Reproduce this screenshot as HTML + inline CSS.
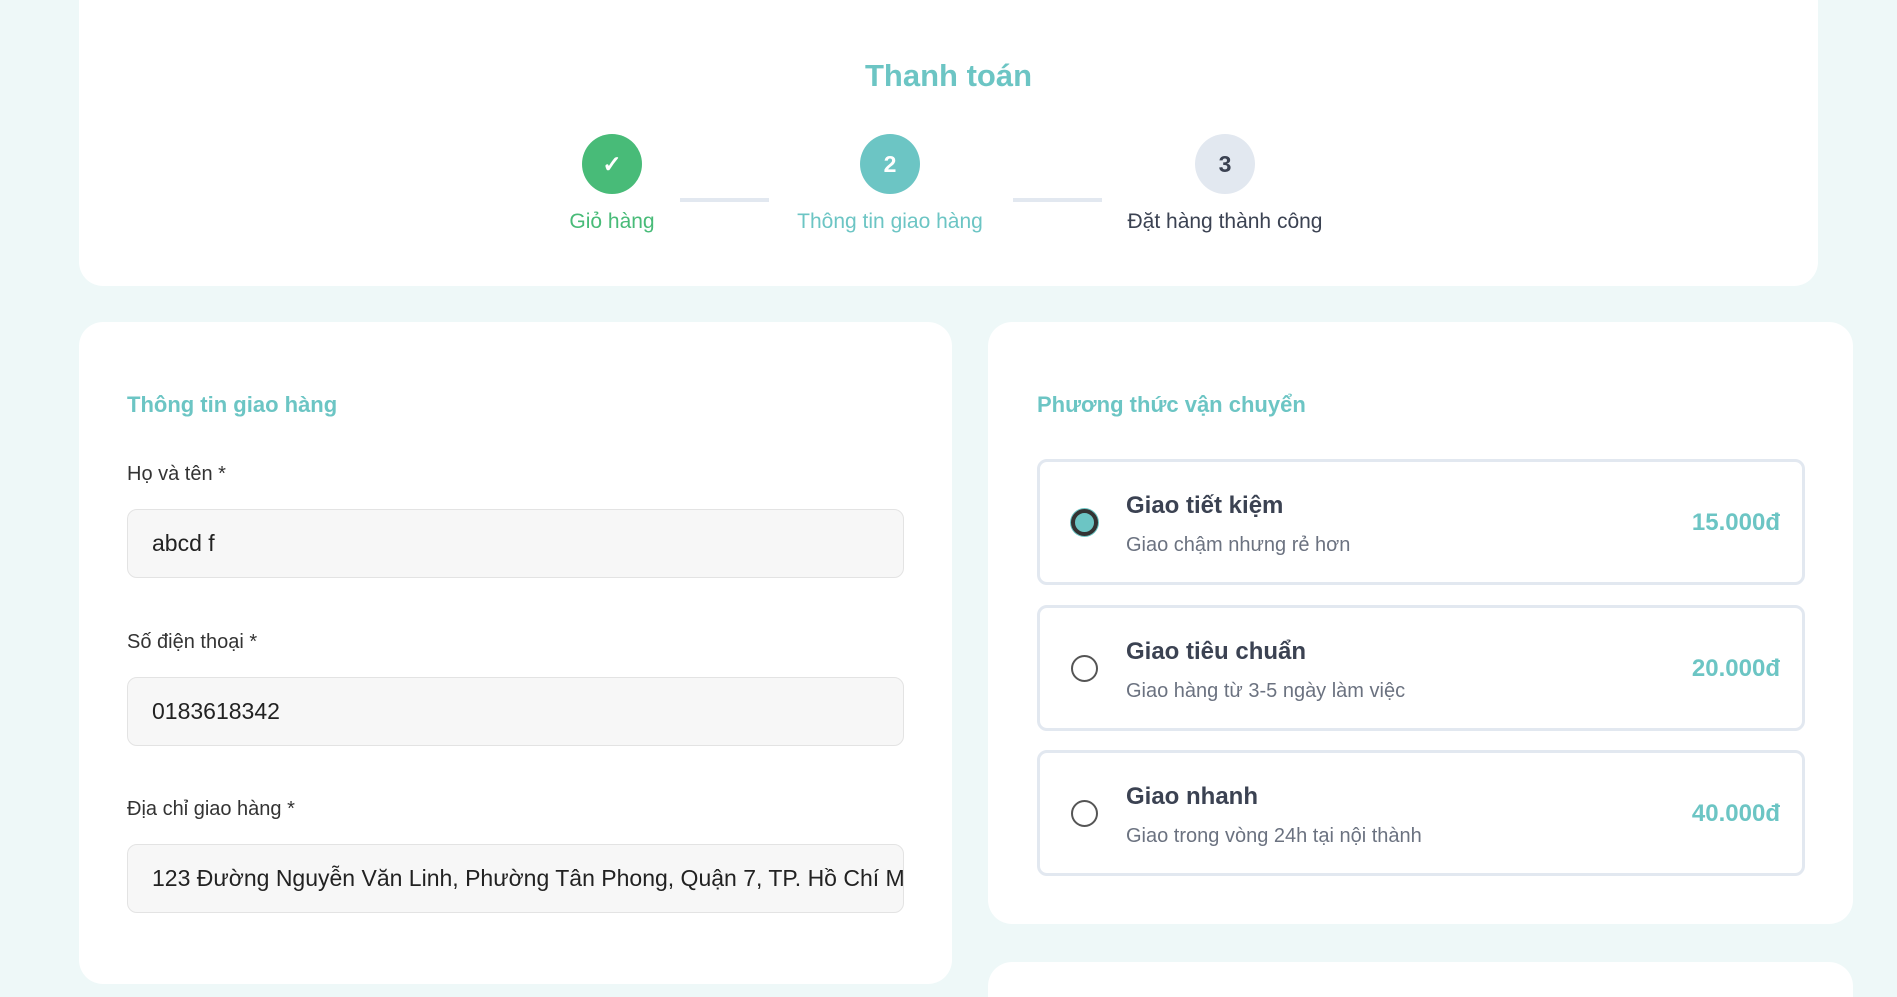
<!DOCTYPE html>
<html style="width:1897px;height:997px;overflow:hidden"><head><meta charset="utf-8"><style>
*{box-sizing:border-box;margin:0;padding:0}
body{width:1897px;height:997px;overflow:hidden;background:#eef8f8;font-family:"Liberation Sans",sans-serif;position:relative;color:#333}
.card{position:absolute;background:#fff;border-radius:24px}
.abs{position:absolute}
.circ{position:absolute;width:60px;height:60px;border-radius:50%;top:134px;display:flex;align-items:center;justify-content:center;font-weight:bold;font-size:23px}
.lbl{position:absolute;top:210px;font-size:21px;transform:translateX(-50%);white-space:nowrap}
.line{position:absolute;top:198px;height:4px;background:#e2e8f0}
.h{position:absolute;font-size:22px;font-weight:bold;color:#6cc5c4}
.fl{position:absolute;left:127px;font-size:20px;color:#333}
.inp{position:absolute;left:127px;width:777px;height:69px;background:#f7f7f7;border:1px solid #e3e3e3;border-radius:10px;font-size:23px;padding-left:24px;padding-right:24px;line-height:67px;color:#222;white-space:nowrap;overflow:hidden}
.opt{position:absolute;left:1037px;width:768px;height:126px;border:3px solid #e2e8f0;border-radius:10px}
.rad{position:absolute;left:31px;top:47px;width:27px;height:27px;border-radius:50%;border:2px solid #555}
.ot{position:absolute;left:86px;top:30px;font-size:24px;font-weight:bold;color:#3b4252}
.os{position:absolute;left:86px;top:72px;font-size:20px;color:#6b7280}
.op{position:absolute;right:22px;top:47px;font-size:24px;font-weight:bold;color:#6cc5c4}
</style></head><body>
<div class="card" style="left:79px;top:-30px;width:1739px;height:316px"></div>
<div class="abs" style="left:0;width:1897px;text-align:center;top:58px;font-size:31px;font-weight:bold;color:#6cc5c4">Thanh toán</div>
<div class="circ" style="left:582px;background:#48bb78;color:#fff">✓</div>
<div class="circ" style="left:860px;background:#6cc5c4;color:#fff">2</div>
<div class="circ" style="left:1195px;background:#e2e8f0;color:#3b4252">3</div>
<div class="line" style="left:680px;width:89px"></div>
<div class="line" style="left:1013px;width:89px"></div>
<div class="lbl" style="left:612px;color:#48bb78">Giỏ hàng</div>
<div class="lbl" style="left:890px;color:#6cc5c4">Thông tin giao hàng</div>
<div class="lbl" style="left:1225px;color:#3b4252">Đặt hàng thành công</div>

<div class="card" style="left:79px;top:322px;width:873px;height:662px"></div>
<div class="h" style="left:127px;top:392px">Thông tin giao hàng</div>
<div class="fl" style="top:463px">Họ và tên *</div>
<div class="inp" style="top:509px">abcd f</div>
<div class="fl" style="top:631px">Số điện thoại *</div>
<div class="inp" style="top:677px">0183618342</div>
<div class="fl" style="top:798px">Địa chỉ giao hàng *</div>
<div class="inp" style="top:844px">123 Đường Nguyễn Văn Linh, Phường Tân Phong, Quận 7, TP. Hồ Chí Minh</div>

<div class="card" style="left:988px;top:322px;width:865px;height:602px"></div>
<div class="h" style="left:1037px;top:392px">Phương thức vận chuyển</div>
<div class="opt" style="top:459px"><div class="rad" style="border:4px solid #333;background:#6cc5c4;box-shadow:0 0 0 1px #6cc5c4"></div><div class="ot">Giao tiết kiệm</div><div class="os">Giao chậm nhưng rẻ hơn</div><div class="op">15.000đ</div></div>
<div class="opt" style="top:605px"><div class="rad"></div><div class="ot">Giao tiêu chuẩn</div><div class="os">Giao hàng từ 3-5 ngày làm việc</div><div class="op">20.000đ</div></div>
<div class="opt" style="top:750px"><div class="rad"></div><div class="ot">Giao nhanh</div><div class="os">Giao trong vòng 24h tại nội thành</div><div class="op">40.000đ</div></div>

<div class="card" style="left:988px;top:962px;width:865px;height:35px;border-radius:24px 24px 0 0"></div>
</body></html>
